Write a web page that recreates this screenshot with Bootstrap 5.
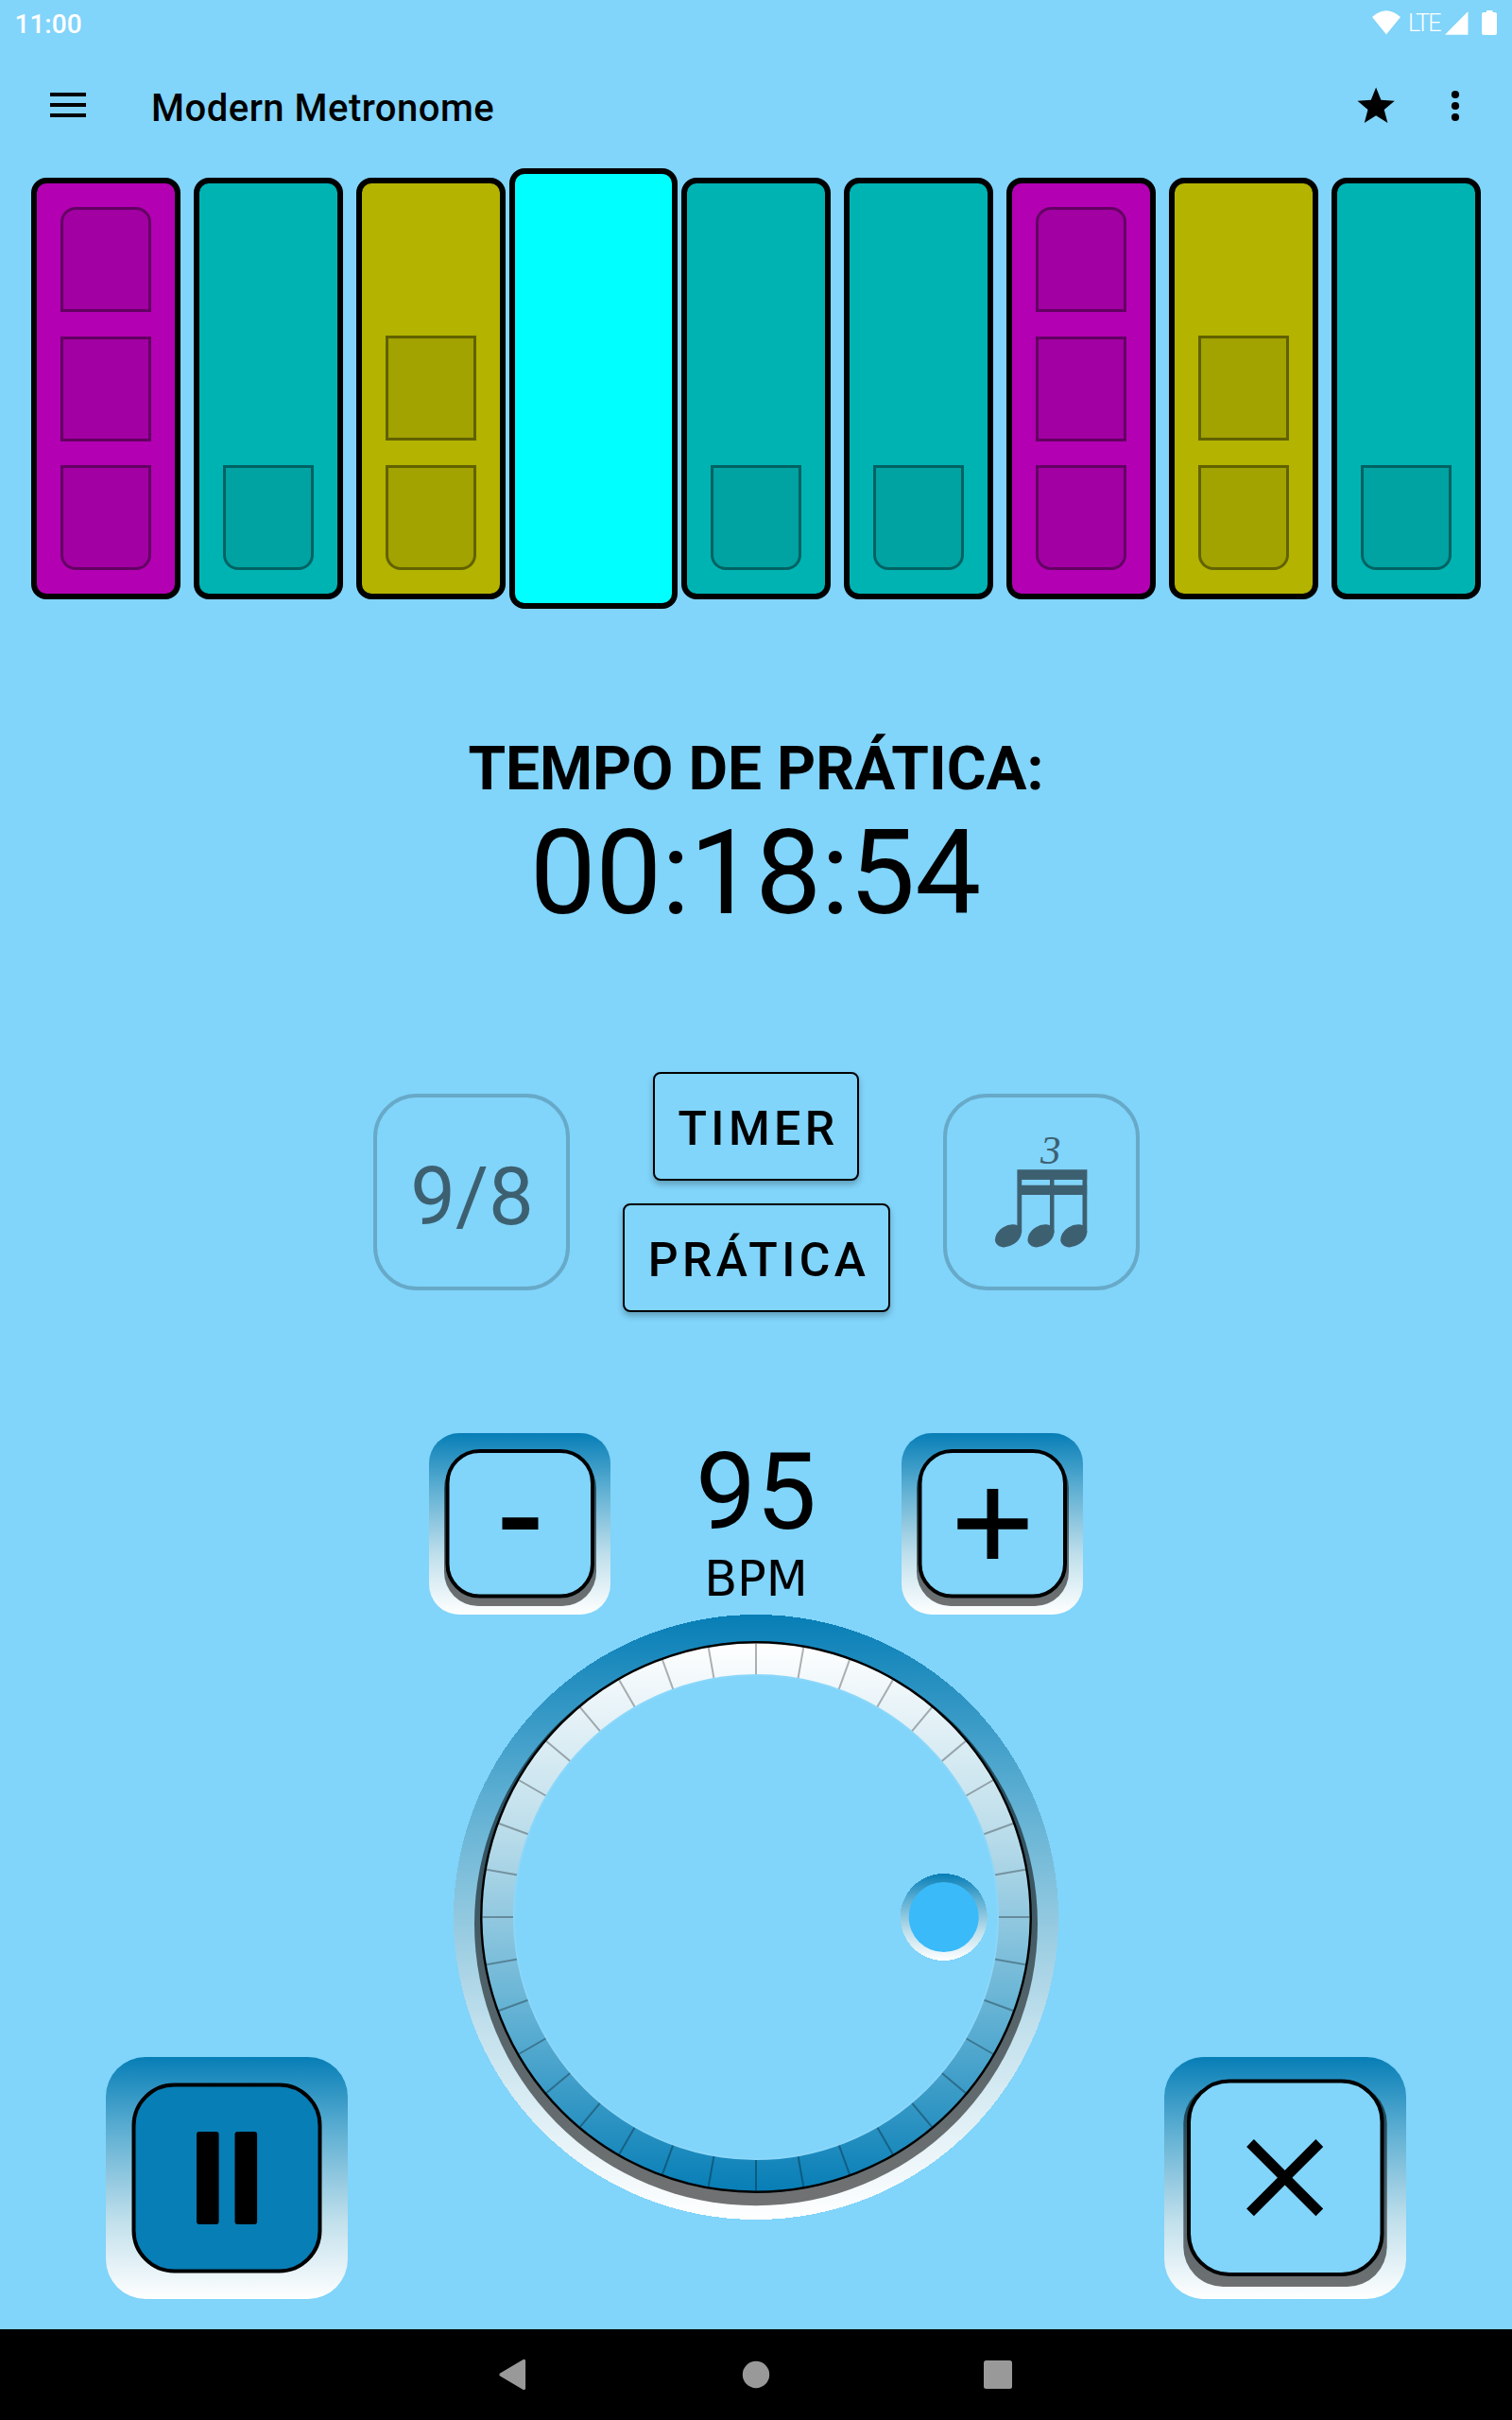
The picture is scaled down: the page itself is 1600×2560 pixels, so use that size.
<!DOCTYPE html>
<html lang="pt">
<head>
<meta charset="utf-8">
<meta name="viewport" content="width=device-width, initial-scale=1">
<title>Modern Metronome</title>
<link href="https://cdn.jsdelivr.net/npm/bootstrap@5.3.0/dist/css/bootstrap.min.css" rel="stylesheet">
<style>
:root{--sky:#81d4fa;--deep:#077eb6}
body{font-family:Roboto,"Liberation Sans",sans-serif;color:#000;background:var(--sky);width:1600px;height:2560px;overflow:hidden}
svg{display:block;flex:none}
.status{height:48px;padding:0 16px 0 15.5px;color:#fff}
.clock{font-size:28px;font-weight:500;line-height:51px}
.lte{font-size:25px;font-weight:300;line-height:50px;width:34px;letter-spacing:-1.8px;white-space:nowrap}
.topbar{height:128px;padding:0 55px 0 53px}
.title{font-size:40px;font-weight:500;line-height:48px;letter-spacing:.5px;padding:43px 0 0 69px}
.beats{padding:12px 33px 0;gap:14.56px;height:458px}
.beat{flex:0 0 157.5px;height:446px;border:6px solid #000;border-radius:16px;padding:25px;gap:25.5px}
.beat.purple{background:#b300b3}.beat.teal{background:#00b3b3}.beat.olive{background:#b3b300}
.beat.on{background:#0ff;margin:-10px;flex-basis:177.5px;height:466px}
.cell{height:111.2px;border:3px solid rgba(0,0,0,.4);background:rgba(0,0,0,.09)}
.cell.first{border-radius:16px 16px 0 0}.cell.last{border-radius:0 0 16px 16px}
.practice{padding-top:142px;height:500px}
.ptitle{font-size:64px;font-weight:700;line-height:75px}
.ptime{font-size:124.5px;line-height:145px;letter-spacing:-.4px;padding-right:1.5px}
.modes{height:382px;gap:56px;padding-left:1px}
.tile{width:208px;height:208px;border:4px solid rgba(0,0,0,.2);border-radius:46px;margin-top:23px}
.sig{font-size:85px;line-height:100px;color:#3d6071;padding:9px 0 0 1px}
.midcol{width:283px;gap:24px}
.obtn{height:115px;border:2px solid #000;border-radius:8px;font-size:50px;font-weight:500;letter-spacing:4.4px;line-height:111px;padding:3px 0 0 5px;background:var(--sky);box-shadow:0 4px 6px rgba(0,0,0,.25);color:#000}
.w-timer{width:218px;margin-right:1px}.w-prat{width:283px}
.tempo{height:192px}
.well{background:linear-gradient(var(--deep),#5caed2 30%,#c1e0ec 68%,#fff)}
.well-s{width:192px;height:192px;border-radius:32px;padding-top:17px}
.well-l{width:256px;height:256px;border-radius:42px}
.bpmcol{width:308px}
.bpm{font-size:114px;line-height:124px}
.bpml{font-family:"DejaVu Sans",sans-serif;font-size:51px;line-height:60px;padding-top:1px}
.bottom{height:756px;padding:0 112px}
.sidekey{padding-top:468px}
.nav-sys{height:96px;background:#000}
</style>
</head>
<body class="d-flex flex-column m-0">
<div class="status d-flex justify-content-between">
  <span class="clock">11:00</span>
  <div class="d-flex">
    <svg width="38" height="48"><path d="M0 18Q15 4.500 30 18L15 36.500Z" fill="#fff"/></svg>
    <span class="lte">LTE</span>
    <svg width="60" height="48" fill="#fff"><path d="M5 36.700L29.500 12v24.700zM49 11h6.500v2H58a2 2 0 0 1 2 2v20a2 2 0 0 1-2 2H46a2 2 0 0 1-2-2V15a2 2 0 0 1 2-2h3z"/></svg>
  </div>
</div>
<header class="topbar d-flex align-items-start">
  <svg width="38" height="128"><path d="M0 52h38M0 63h38M0 74h38" stroke="#000" stroke-width="4"/></svg>
  <div class="title flex-grow-1">Modern Metronome</div>
  <svg width="109" height="128"><path transform="translate(0.500 44.500)" d="M19.600 0l5.300 13.300 14.400.900-11.100 9.200L31.900 37.500 19.600 29.800 7.300 37.500 11 23.400 0 14.200l14.300-.900z"/><circle cx="104" cy="52" r="4.100"/><circle cx="104" cy="64" r="4.100"/><circle cx="104" cy="76" r="4.100"/></svg>
</header>
<section class="beats d-flex">
  <div class="beat purple d-flex flex-column justify-content-end"><div class="cell first"></div><div class="cell"></div><div class="cell last"></div></div>
  <div class="beat teal d-flex flex-column justify-content-end"><div class="cell last"></div></div>
  <div class="beat olive d-flex flex-column justify-content-end"><div class="cell"></div><div class="cell last"></div></div>
  <div class="beat on"></div>
  <div class="beat teal d-flex flex-column justify-content-end"><div class="cell last"></div></div>
  <div class="beat teal d-flex flex-column justify-content-end"><div class="cell last"></div></div>
  <div class="beat purple d-flex flex-column justify-content-end"><div class="cell first"></div><div class="cell"></div><div class="cell last"></div></div>
  <div class="beat olive d-flex flex-column justify-content-end"><div class="cell"></div><div class="cell last"></div></div>
  <div class="beat teal d-flex flex-column justify-content-end"><div class="cell last"></div></div>
</section>
<section class="practice text-center">
  <div class="ptitle">TEMPO DE PRÁTICA:</div>
  <div class="ptime">00:18:54</div>
</section>
<section class="modes d-flex justify-content-center">
  <div class="tile d-flex align-items-center justify-content-center"><span class="sig">9/8</span></div>
  <div class="midcol d-flex flex-column align-items-center">
    <button class="obtn w-timer">TIMER</button>
    <button class="obtn w-prat">PRÁTICA</button>
  </div>
  <div class="tile">
    <svg width="200" height="200" viewBox="1002 1161 200 200" fill="#3d6071"><text x="1101" y="1230.500" font-family="Liberation Serif" font-style="italic" font-size="43">3</text><path d="M1076.400 1237.300h74V1248h-74zM1076.400 1253.700h74V1264h-74zM1076.400 1237.300h4.800V1304h-4.800zM1111 1237.300h4.500V1304h-4.500zM1145.500 1237.300h4.800V1304h-4.800z"/><g id="h"><ellipse cx="1067" cy="1307.300" rx="15.200" ry="10.500" transform="rotate(-33 1067 1307.300)"/></g><use href="#h" x="34.500"/><use href="#h" x="69.300"/></svg>
  </div>
</section>
<section class="tempo d-flex justify-content-center">
  <div class="well well-s d-flex justify-content-center">
    <svg width="161" height="166" viewBox="0 0 161 166"><rect y="5" width="161" height="161" rx="36" fill-opacity=".55"/><rect x="3.500" y="2" width="153.500" height="153.500" rx="34" fill="#81d4fa" stroke="#000" stroke-width="4"/><path d="M61.500 72.300h38v12.700h-38z"/></svg>
  </div>
  <div class="bpmcol text-center"><div class="bpm">95</div><div class="bpml">BPM</div></div>
  <div class="well well-s d-flex justify-content-center">
    <svg width="161" height="166" viewBox="0 0 161 166"><rect y="5" width="161" height="161" rx="36" fill-opacity=".55"/><rect x="3.500" y="2" width="153.500" height="153.500" rx="34" fill="#81d4fa" stroke="#000" stroke-width="4"/><path d="M43.300 73.200h74.200v11.600H43.300zM74.500 42h11.800v74H74.500z"/></svg>
  </div>
</section>
<section class="bottom d-flex justify-content-between">
  <div class="sidekey"><div class="well well-l">
    <svg width="256" height="256"><rect x="29.500" y="29.500" width="197" height="197" rx="43" fill="#077eb6" stroke="#000" stroke-width="4"/><rect x="96" y="79" width="23.600" height="98" rx="3"/><rect x="136.500" y="79" width="23.600" height="98" rx="3"/></svg>
  </div></div>
  <svg width="640" height="640" viewBox="480 1708 640 640">
    <defs>
      <linearGradient id="gd" x1="0" y1="0" x2="0" y2="1"><stop offset="0" stop-color="#077eb6"/><stop offset=".3" stop-color="#5caed2"/><stop offset=".68" stop-color="#c1e0ec"/><stop offset="1" stop-color="#fff"/></linearGradient>
      <linearGradient id="gu" x1="0" y1="1" x2="0" y2="0"><stop offset="0" stop-color="#077eb6"/><stop offset=".3" stop-color="#5caed2"/><stop offset=".68" stop-color="#c1e0ec"/><stop offset="1" stop-color="#fff"/></linearGradient>
    </defs>
    <circle cx="800" cy="2028" r="320" fill="url(#gd)" shape-rendering="crispEdges"/>
    <circle cx="800" cy="2035.300" r="298" fill-opacity=".55"/>
    <circle cx="800" cy="2028" r="290.700" fill="url(#gu)" stroke="#000" stroke-width="2.400"/>
    <g id="ticks" stroke="#000" stroke-opacity=".3" stroke-width="2"></g>
    <circle cx="800" cy="2028" r="256" fill="#81d4fa" stroke="#8ad7fa" stroke-width="2"/>
    <circle cx="998.700" cy="2028" r="46" fill="url(#gd)" shape-rendering="crispEdges"/>
    <circle cx="998.700" cy="2028" r="37" fill="#3abaf9"/>
  </svg>
  <div class="sidekey"><div class="well well-l">
    <svg width="256" height="256" viewBox="1232 2176 256 256"><rect x="1252.300" y="2204" width="215.400" height="215" rx="42" fill-opacity=".55"/><rect x="1258" y="2201.500" width="204.500" height="204.500" rx="43" fill="#81d4fa" stroke="#000" stroke-width="4"/><path d="M1323 2267l73.300 73.300M1396.300 2267l-73.300 73.300" stroke="#000" stroke-width="11"/></svg>
  </div></div>
</section>
<footer class="nav-sys d-flex justify-content-center">
  <svg width="600" height="96" viewBox="500 2464 600 96" fill="#999"><path d="M554.500 2497.500v29L530 2512z" stroke="#999" stroke-width="3.200" stroke-linejoin="round"/><circle cx="800" cy="2512" r="14.200"/><rect x="1041" y="2497" width="30" height="30" rx="2.500"/></svg>
</footer>
<script src="https://cdn.jsdelivr.net/npm/bootstrap@5.3.0/dist/js/bootstrap.bundle.min.js"></script>
<script>
// 36 ticks around the dial rim, one every 10 degrees
const g = document.getElementById('ticks');
for (let a = 0; a < 360; a += 10) {
  const l = document.createElementNS('http://www.w3.org/2000/svg', 'line');
  l.setAttribute('x1', 800); l.setAttribute('x2', 800);
  l.setAttribute('y1', 1738.5); l.setAttribute('y2', 1772);
  l.setAttribute('transform', `rotate(${a} 800 2028)`);
  g.appendChild(l);
}
</script>
</body>
</html>
